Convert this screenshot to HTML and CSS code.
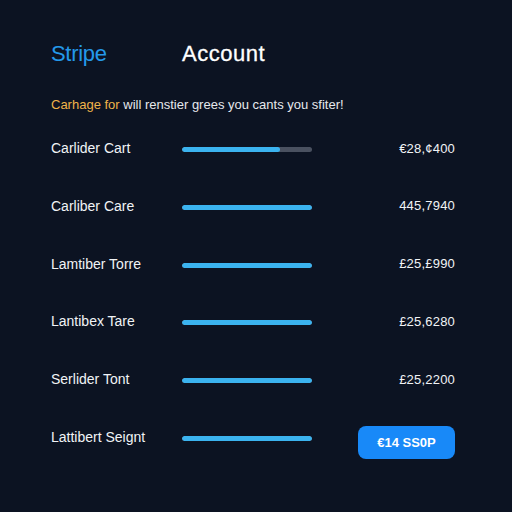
FILE: index.html
```html
<!DOCTYPE html>
<html lang="en">
<head>
    <meta charset="UTF-8">
    <meta name="viewport" content="width=device-width, initial-scale=1.0">
    <title>Stripe Account</title>
    <link rel="stylesheet" href="styles.css">
</head>
<body>
    <div class="page">
        <div class="header">
            <div class="brand">Stripe</div>
            <div class="title">Account</div>
        </div>

        <p class="notice"><span class="notice-lead">Carhage for</span> will renstier grees you cants you sfiter!</p>

        <div class="rows">
            <div class="row">
                <div class="label">Carlider Cart</div>
                <div class="bar"><div class="bar-fill" style="width: 75%"></div></div>
                <div class="amount">€28,¢400</div>
            </div>
            <div class="row">
                <div class="label">Carliber Care</div>
                <div class="bar"><div class="bar-fill" style="width: 100%"></div></div>
                <div class="amount">445,7940</div>
            </div>
            <div class="row">
                <div class="label">Lamtiber Torre</div>
                <div class="bar"><div class="bar-fill" style="width: 100%"></div></div>
                <div class="amount">£25,£990</div>
            </div>
            <div class="row">
                <div class="label">Lantibex Tare</div>
                <div class="bar"><div class="bar-fill" style="width: 100%"></div></div>
                <div class="amount">£25,6280</div>
            </div>
            <div class="row">
                <div class="label">Serlider Tont</div>
                <div class="bar"><div class="bar-fill" style="width: 100%"></div></div>
                <div class="amount">£25,2200</div>
            </div>
            <div class="row">
                <div class="label">Lattibert Seignt</div>
                <div class="bar"><div class="bar-fill" style="width: 100%"></div></div>
                <div class="amount"><button class="pay-btn">€14 SS0P</button></div>
            </div>
        </div>
    </div>
</body>
</html>
```

FILE: styles.css
```css
:root {
    --bg: #0c1322;
    --brand: #2499ea;
    --bar: #3bb3ef;
    --track: #4a5160;
    --text: #f1f3f6;
    --accent: #f0b34a;
}

* {
    margin: 0;
    padding: 0;
    box-sizing: border-box;
}

body {
    font-family: 'Liberation Sans', Arial, sans-serif;
    background: var(--bg);
    color: var(--text);
    width: 512px;
    height: 512px;
    overflow: hidden;
}

.page {
    padding: 41px 57px 0 51px;
}

.header {
    display: flex;
    align-items: center;
    height: 26px;
}

.brand {
    width: 131px;
    font-size: 22px;
    color: var(--brand);
    letter-spacing: -0.3px;
}

.title {
    font-size: 22px;
    color: #ffffff;
    letter-spacing: 0.5px;
    -webkit-text-stroke: 0.3px #ffffff;
}

.notice {
    margin-top: 30px;
    font-size: 13px;
    line-height: 16px;
    color: #e6e8ec;
}

.notice-lead {
    color: var(--accent);
}

.rows {
    margin-top: 26px;
    display: flex;
    flex-direction: column;
    gap: 39.8px;
}

.row {
    display: grid;
    grid-template-columns: 131px 130px 1fr;
    align-items: center;
    height: 18px;
}

.label {
    font-size: 14px;
}

.bar {
    height: 5px;
    border-radius: 3px;
    background: var(--track);
    overflow: hidden;
    margin-top: 3px;
}

.bar-fill {
    height: 100%;
    background: var(--bar);
    border-radius: 3px;
}

.amount {
    text-align: right;
    font-size: 13px;
    letter-spacing: 0.2px;
}

.pay-btn {
    display: block;
    font-family: inherit;
    width: 97px;
    height: 33px;
    margin: -2px 0 -13px auto;
    border: none;
    border-radius: 8px;
    background: #1889f8;
    color: #ffffff;
    font-size: 13px;
    font-weight: bold;
}
```
